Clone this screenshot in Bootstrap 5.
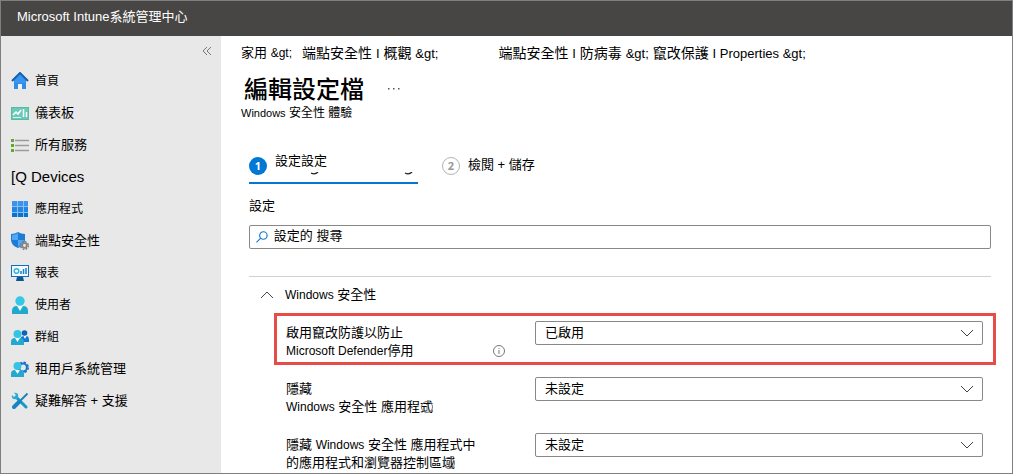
<!DOCTYPE html>
<html lang="zh-Hant">
<head>
<meta charset="utf-8">
<meta name="viewport" content="width=device-width, initial-scale=1">
<title>Microsoft Intune系統管理中心</title>
<link href="https://cdn.jsdelivr.net/npm/bootstrap@5.3.0/dist/css/bootstrap.min.css" rel="stylesheet">
<style>
body{font-family:"Liberation Sans","Noto Sans CJK TC",sans-serif;font-size:13px;line-height:18px;color:#000;background:#fff}
.shell{border:1px solid #7f7f7f}
.topbar{background:#484644;color:#fff;height:35px;padding:0 16px 4px;font-size:13px}
.side{width:220px;flex:none;background:#e8e8e8}
.collapse-btn{color:#777;padding:0 9px;height:28px;line-height:20px}
.side .nav-link{height:32px;padding:1px 10px 0;gap:6px;color:#000;display:flex;align-items:center}
.side .nav-link svg{width:18px;height:18px;flex:none}
.side .narrow{font-size:12px}
.side .wide{font-size:15px}
.content{padding:7px 16px 0 20px;min-width:0}
.crumbs{font-size:14px;height:20px;line-height:20px}
.crumbs a{color:#000;text-decoration:none;white-space:nowrap}
.crumbs .latin{font-size:13px}
.crumbs .first{font-size:13px;margin-right:10px}
.crumbs .first .latin{font-size:12px}
.crumbs .second{margin-right:60px}
h1{font-size:24px;line-height:30px;font-weight:500;padding-left:3px}
.more-btn{color:#555;line-height:18px}
.subtitle{font-size:12px;line-height:16px}
.subtitle .latin{font-size:11px}
.inner{padding:0 5px 0 8px}
.steps{gap:24px;margin-top:27px}
.steps .nav-link{height:36px;padding:0;color:#000;display:flex;position:relative}
.steps .current{width:169px;border-bottom:2px solid #0078d4;border-radius:0}
.num{width:18px;height:18px;border-radius:50%;font-size:11px;line-height:18px;text-align:center;margin-top:9px;font-family:"Open Sans",sans-serif}
.num-on{background:#0078d4;color:#fff;font-weight:700}
.num-off{border:1px solid #b3b3b3;color:#999;line-height:16px;font-weight:700}
.tails{position:absolute;left:62px;top:24px}
.field-label{margin-top:13px;line-height:18px}
.search-box{height:24px;border:1px solid #8a8886;border-radius:2px;margin-top:10px;padding-left:6px}
.search-box input{font-size:13px;line-height:18px;padding:0 0 2px 6px;color:#000}
.search-box input::placeholder{color:#000;opacity:1}
.divider{border-top:1px solid #d2d0ce;margin-top:27px}
.section-btn{padding:0 0 0 12px;gap:12px;margin-top:8px;height:20px;color:#000;font-size:13px;line-height:18px}
.section-btn .latin,.setting .latin{font-size:12px}
.settings{padding:0 0 0 33px;margin-top:8px}
.setting{padding:8px 13px 4px 12px}
.setting + .setting{margin-top:4px}
.setting.marked{padding:5px 10px 2px 9px;border:3px solid #e74c47}
.setting:last-child{padding-bottom:0;margin-top:5px}
.name{width:249px;flex:none;margin-top:3px}
.name label{display:inline}
.name.tight{line-height:17px}
.info{width:12px;height:12px;color:#777;vertical-align:-2px}
.info-end{margin:0 30px 3px auto}
.info-over{margin-left:-12px}
.form-select{height:24px;padding:0 28px 0 9px;font-size:13px;line-height:20px;color:#000;border:1px solid #8a8886;border-radius:2px;background-color:#fff;background-image:url("data:image/svg+xml,%3Csvg xmlns='http://www.w3.org/2000/svg' viewBox='0 0 14 14'%3E%3Cpath d='M1 4l6 6 6-6' fill='none' stroke='%23444'/%3E%3C/svg%3E");background-size:14px 14px;background-position:right 8px center}
</style>
</head>
<body>
<div class="shell min-vh-100 d-flex flex-column">
<header class="topbar d-flex align-items-center">Microsoft Intune系統管理中心</header>
<div class="d-flex flex-grow-1">
<nav class="side" aria-label="主要">
<div class="d-flex justify-content-end"><button class="btn border-0 collapse-btn" type="button" aria-label="摺疊"><svg width="10" height="10" viewBox="0 0 10 10" fill="none" stroke="currentColor"><path d="M5 1L1 5l4 4M9 1L5 5l4 4"/></svg></button></div>
<div class="nav flex-column flex-nowrap">
<a class="nav-link narrow" href="#"><svg viewBox="0 0 18 18"><path d="M3 8l6-6 6 6v9h-4v-5H7v5H3z" fill="#2f8ceb"/><path d="M7 12h4v5H7z" fill="#f2f2f2"/><path d="M1 9l8-8 8 8" fill="none" stroke="#0f5fb0" stroke-width="2"/><path d="M3 9l6-6 6 6v2H3z" fill="#3a95ef"/></svg>首頁</a>
<a class="nav-link" href="#"><svg viewBox="0 0 18 18"><path d="M0 3h18v13H0z" fill="#55bba9"/><path d="M1 4h16v11H1z" fill="#6cc9b8"/><path d="M2 11l3-3 2 2 3-4M12.500 5v8M15.500 8v5" fill="none" stroke="#fff" stroke-width="1.500"/><path d="M2 13.500h8" stroke="#d7f1ec"/></svg>儀表板</a>
<a class="nav-link" href="#"><svg viewBox="0 0 18 18"><path d="M0 3h3v3H0zM0 8h3v3H0zM0 13h3v3H0z" fill="#5ea82c"/><path d="M4 4.500h14M4 9.500h14M4 14.500h14" stroke="#9b9b9b" stroke-width="1.300"/></svg>所有服務</a>
<a class="nav-link wide" href="#">[Q Devices</a>
<a class="nav-link narrow" href="#"><svg viewBox="0 0 18 18"><path d="M1 1h16v16H1z" fill="#8dc0f2"/><path d="M1 1h5v5H1zM7 1h5v5H7zM13 1h4v5h-4z" fill="#3a94ea"/><path d="M1 7h5v5H1zM7 7h5v5H7zM13 7h4v5h-4z" fill="#2486e0"/><path d="M1 13h5v4H1zM7 13h5v4H7zM13 13h4v4h-4z" fill="#0873d1"/></svg>應用程式</a>
<a class="nav-link" href="#"><svg viewBox="0 0 18 18"><path d="M0 2q4 0 7-2 3 2 7 2v6q0 5-7 8-7-3-7-8z" fill="#1d7cd6"/><path d="M7 1v7H1V3q3 0 6-2zM7 8h6q0 4-6 7z" fill="#52a7f2"/><circle cx="13.500" cy="13.500" r="3.800" fill="none" stroke="#777" stroke-width="1.500" stroke-dasharray="1.700 1.280"/><circle cx="13.500" cy="13.500" r="2.300" fill="#e8e8e8" stroke="#888" stroke-width="1.800"/></svg>端點安全性</a>
<a class="nav-link narrow" href="#"><svg viewBox="0 0 18 18"><path d="M6 13h6l1 4H5z" fill="#12558e"/><path d="M0 1h18v12H0z" fill="#0f6fc4"/><path d="M1 2h16v10H1z" fill="#f3f9ff"/><circle cx="5.500" cy="7" r="2.300" fill="none" stroke="#31b7d8" stroke-width="1.500"/><path d="M10 10V7M12.500 10V5M15 10V4" stroke="#1683cf" stroke-width="1.500"/></svg>報表</a>
<a class="nav-link narrow" href="#"><svg viewBox="0 0 18 18"><path d="M1 18v-3q0-5 5-5h6q5 0 5 5v3z" fill="#1fa9cc"/><path d="M6 10h6l-3 5z" fill="#e9fafd"/><circle cx="9" cy="5" r="4.700" fill="#32c8e6"/></svg>使用者</a>
<a class="nav-link narrow" href="#"><svg viewBox="0 0 18 18"><circle cx="13.500" cy="5" r="2.800" fill="#0f63b5"/><path d="M9 14v-3q1-3 4-3h2q3 0 3 4v2z" fill="#1479d1"/><path d="M12.500 8h3L14 11z" fill="#fff"/><path d="M0 17v-3q0-4 4-4h5q4 0 4 4v3z" fill="#22a9cd"/><path d="M4 10h5l-2.500 4z" fill="#effcff"/><circle cx="6.500" cy="6" r="4" fill="#35c4e4"/></svg>群組</a>
<a class="nav-link" href="#"><svg viewBox="0 0 18 18"><circle cx="12" cy="7.500" r="5.200" fill="none" stroke="#126dc0" stroke-width="1.600" stroke-dasharray="2.300 1.784"/><circle cx="12" cy="7.500" r="3.900" fill="#e8e8e8" stroke="#1476cd" stroke-width="2"/><path d="M0 17v-3q0-4 4-4h5q4 0 4 4v3z" fill="#22a9cd"/><path d="M4 10h5l-2.500 4z" fill="#effcff"/><circle cx="6.500" cy="6" r="4" fill="#35c4e4"/></svg>租用戶系統管理</a>
<a class="nav-link" href="#"><svg viewBox="0 0 18 18"><path d="M4 4l11 11" stroke="#1598c9" stroke-width="3" stroke-linecap="round"/><circle cx="4" cy="4" r="3.200" fill="#2da9d2"/><path d="M0 2l2-2 3 3-2 2z" fill="#e8e8e8"/><path d="M16.500 1.500L9 9" stroke="#1581bd" stroke-width="1.800"/><path d="M8 10l-5 5" stroke="#1784c4" stroke-width="4" stroke-linecap="round"/></svg>疑難解答 + 支援</a>
</div>
</nav>
<main class="content flex-grow-1">
<nav class="crumbs d-flex flex-wrap" aria-label="導覽路徑"><a class="first" href="#">家用 <span class="latin">&amp;gt;</span></a><a class="second" href="#">端點安全性 <span class="latin">I</span> 概觀 <span class="latin">&amp;gt;</span></a><a href="#">端點安全性 <span class="latin">I</span> 防病毒 <span class="latin">&amp;gt;</span> 竄改保護 <span class="latin">I Properties &amp;gt;</span></a></nav>
<div class="d-flex align-items-center mt-2 pt-1"><h1 class="m-0">編輯設定檔</h1><button class="btn border-0 p-0 ms-4 mb-1 more-btn" type="button" aria-label="更多"><svg width="12" height="12" viewBox="0 0 12 12" fill="currentColor"><path d="M0 5h1.500v1.500H0zM5 5h1.500v1.500H5zM10 5h1.500v1.500H10z"/></svg></button></div>
<div class="subtitle"><span class="latin">Windows</span> 安全性 體驗</div>
<div class="inner">
<div class="nav steps">
<a class="nav-link current" href="#"><span class="num num-on">1</span><span class="ms-2 mt-1">設定設定</span><svg class="tails" width="102" height="3" viewBox="0 0 102 3" fill="none" stroke="#222" stroke-width="1.300"><path d="M0 1q4 2 7-1M94 1q4 2 7-1"/></svg></a>
<a class="nav-link" href="#"><span class="num num-off">2</span><span class="ms-2 mt-2">檢閱 + 儲存</span></a>
</div>
<label class="field-label d-block" for="search">設定</label>
<div class="search-box d-flex align-items-center"><svg width="12" height="12" viewBox="0 0 12 12" fill="none" stroke="#1979ca" stroke-width="1.200"><circle cx="7.500" cy="4.500" r="3.800"/><path d="M4.800 7.200L.5 11.500"/></svg><input id="search" class="form-control border-0 bg-transparent shadow-none" type="text" placeholder="設定的 搜尋"></div>
<div class="divider"></div>
<button class="btn border-0 d-flex align-items-center section-btn" type="button" aria-expanded="true"><svg width="12" height="12" viewBox="0 0 12 12" fill="none" stroke="#444"><path d="M0 9l6-6 6 6"/></svg><span><span class="latin">Windows</span> 安全性</span></button>
</div>
<div class="settings">
<div class="setting marked d-flex align-items-start"><div class="name d-flex align-items-end"><label for="s1">啟用竄改防護以防止<br><span class="latin">Microsoft Defender</span>停用</label><svg class="info info-end" viewBox="0 0 12 12"><circle cx="6" cy="6" r="5.500" fill="none" stroke="currentColor"/><path d="M6 5v4M6 3v1" stroke="currentColor"/></svg></div><select id="s1" class="form-select"><option>已啟用</option><option>未設定</option></select></div>
<div class="setting d-flex align-items-start"><div class="name"><label for="s2">隱藏<br><span class="latin">Windows</span> 安全性 應用程式</label><svg class="info info-over" viewBox="0 0 12 12"><circle cx="6" cy="6" r="5.500" fill="none" stroke="currentColor"/><path d="M6 5v4M6 3v1" stroke="currentColor"/></svg></div><select id="s2" class="form-select"><option>未設定</option><option>已啟用</option></select></div>
<div class="setting d-flex align-items-start"><div class="name tight"><label for="s3">隱藏 <span class="latin">Windows</span> 安全性 應用程式中<br>的應用程式和瀏覽器控制區域</label><svg class="info info-over" viewBox="0 0 12 12"><circle cx="6" cy="6" r="5.500" fill="none" stroke="currentColor"/><path d="M6 5v4M6 3v1" stroke="currentColor"/></svg></div><select id="s3" class="form-select"><option>未設定</option><option>已啟用</option></select></div>
</div>
</main>
</div>
</div>
<script src="https://cdn.jsdelivr.net/npm/bootstrap@5.3.0/dist/js/bootstrap.bundle.min.js"></script>
</body>
</html>
